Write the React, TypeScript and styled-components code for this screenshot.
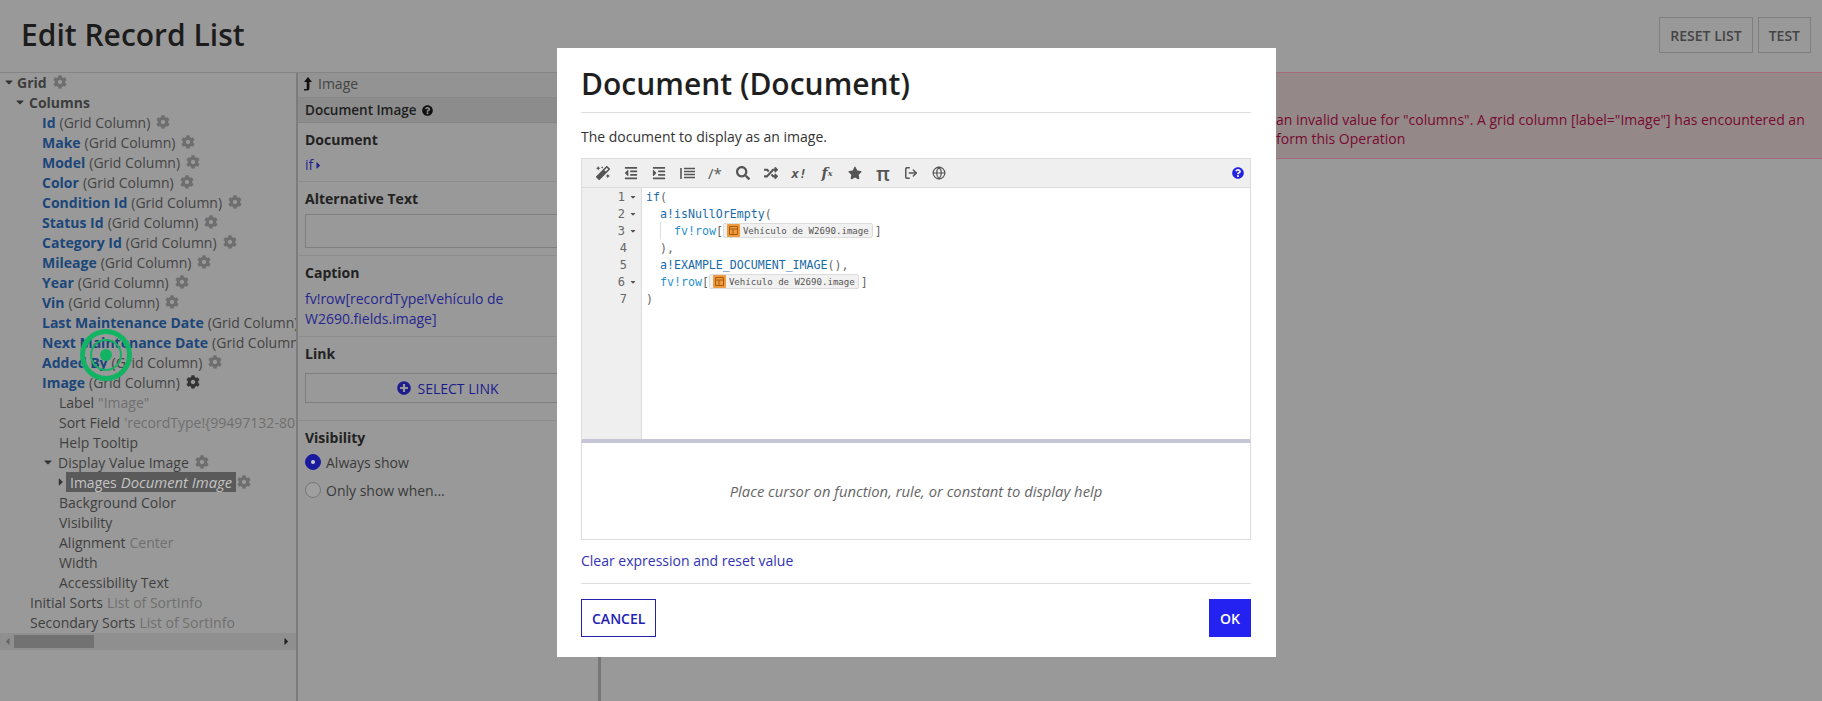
import React from "react";
import styled, { createGlobalStyle } from "styled-components";
import {
  FaCog, FaCaretDown, FaCaretRight, FaCaretLeft, FaQuestionCircle, FaPlusCircle,
  FaMagic, FaOutdent, FaIndent, FaSearch, FaRandom, FaStar,
} from "react-icons/fa";
import { LogOut, Globe } from "lucide-react";

const Global = createGlobalStyle`
  html, body { margin: 0; padding: 0; height: 701px; overflow: hidden; background: #999; }
  * { box-sizing: border-box; }
  body { font-family: "Open Sans", "Noto Sans", sans-serif; font-size: 14px; color: #333; }
`;

const Page = styled.div`
  position: relative;
  width: 1822px;
  height: 701px;
  display: flex;
  flex-direction: column;
  background: #999;
  overflow: hidden;
`;
const Header = styled.header`
  height: 73px;
  flex: none;
  display: flex;
  align-items: flex-start;
  justify-content: space-between;
  padding: 17px 11px 0 21px;
  border-bottom: 1px solid #858585;
`;
const PageTitle = styled.h1`
  margin: 0;
  font-size: 30px;
  line-height: 36px;
  font-weight: 600;
  color: #1c1c1c;
`;
const HeaderActions = styled.div`
  display: flex;
  gap: 5px;
`;
const GhostButton = styled.button`
  height: 36px;
  padding: 0 ${(p) => p.$pad}px;
  background: transparent;
  border: 1px solid #7f7f7f;
  font: 600 14px "Open Sans", sans-serif;
  color: #444;
`;
const Body = styled.div`
  flex: 1;
  display: flex;
  min-height: 0;
`;
const TreePanel = styled.nav`
  width: 296px;
  flex: none;
  display: flex;
  flex-direction: column;
  overflow: hidden;
`;
const TreeRows = styled.div`
  margin-top: -1px;
`;
const Row = styled.div`
  height: 20px;
  display: flex;
  align-items: center;
  white-space: nowrap;
  padding-left: ${(p) => p.$indent}px;
  font-size: 14px;
  color: #3f3f3f;
`;
const Caret = styled.span`
  width: ${(p) => p.$w}px;
  flex: none;
  display: flex;
  align-items: center;
  color: #333;
  font-size: 12px;
`;
const NodeHead = styled.b`
  font-weight: 700;
  color: ${(p) => (p.$blue ? "#1b4679" : "#3d3d3d")};
  margin-right: 4px;
`;
const Muted = styled.span`
  color: ${(p) => (p.$soft ? "#6f6f6f" : "#444")};
  margin-left: ${(p) => p.$ml || 0}px;
`;
const Selected = styled.span`
  height: 20px;
  display: flex;
  align-items: center;
  padding: 0 4px;
  background: #5a5a5a;
  color: #c4c4c4;
  em { margin-left: 4px; font-size: 14.8px; }
`;
const Gear = styled(FaCog)`
  margin-left: 6px;
  flex: none;
  font-size: 14px;
  color: ${(p) => (p.$dark ? "#333" : "#6e6e6e")};
`;
const ScrollBar = styled.div`
  margin-top: 1px;
  height: 17px;
  display: flex;
  align-items: center;
  justify-content: space-between;
  background: #8f8f8f;
  padding: 0 4px 0 2px;
  font-size: 11px;
  color: #666;
  position: relative;
`;
const ScrollThumb = styled.div`
  position: absolute;
  left: 14px;
  top: 2px;
  width: 80px;
  height: 13px;
  background: #727272;
`;
const Splitter = styled.div`
  width: ${(p) => p.$w}px;
  flex: none;
  background: ${(p) => p.$c};
`;
const Config = styled.section`
  width: 300px;
  flex: none;
  display: flex;
  flex-direction: column;
`;
const Crumb = styled.div`
  height: 25px;
  display: flex;
  align-items: center;
  gap: 5px;
  padding: 0 0 3px 5px;
  background: #939393;
  border-bottom: 1px solid #888;
  color: #444;
  font-size: 14px;
`;
const ConfigTitle = styled.div`
  height: 25px;
  display: flex;
  align-items: center;
  gap: 5px;
  padding-left: 7px;
  background: #8c8c8c;
  border-bottom: 1px solid #858585;
  color: #1e1e1e;
  font-size: 13.5px;
  font-weight: 600;
  svg { font-size: 11px; color: #111; }
`;
const Field = styled.div`
  padding: ${(p) => p.$top}px 7px 0;
  height: ${(p) => p.$h}px;
  border-bottom: ${(p) => (p.$last ? "none" : "1px solid #8e8e8e")};
  flex: none;
`;
const FieldLabel = styled.div`
  font-size: 14px;
  font-weight: 700;
  line-height: 20px;
  color: #222;
`;
const FieldLink = styled.div`
  margin-top: ${(p) => p.$mt}px;
  font-size: 14px;
  line-height: 20px;
  color: #26268f;
  svg { font-size: 11px; vertical-align: -1px; }
`;
const EmptyInput = styled.div`
  margin-top: 5px;
  height: 34px;
  border: 1px solid #7f7f7f;
`;
const LinkButton = styled.div`
  margin-top: 9px;
  height: 30px;
  border: 1px solid #7f7f7f;
  display: flex;
  align-items: center;
  justify-content: center;
  gap: 6px;
  font-size: 14px;
  color: #1c1c8f;
  svg { font-size: 14px; }
`;
const Radio = styled.div`
  display: flex;
  align-items: center;
  gap: 5px;
  height: 20px;
  margin-top: ${(p) => p.$mt}px;
  font-size: 14px;
  color: #3a3a3a;
`;
const RadioMark = styled.span`
  width: 16px;
  height: 16px;
  border-radius: 50%;
  flex: none;
  background: ${(p) => (p.$on ? "#1a1a9e" : "#9f9f9f")};
  border: 1px solid ${(p) => (p.$on ? "#1a1a9e" : "#777")};
  display: flex;
  align-items: center;
  justify-content: center;
  &::after {
    content: "";
    width: 4px;
    height: 4px;
    border-radius: 50%;
    background: ${(p) => (p.$on ? "#ccc" : "transparent")};
  }
`;
const Stage = styled.main`
  flex: 1;
  min-width: 0;
`;
const ErrorBanner = styled.div`
  height: 87px;
  margin-top: -1px;
  padding: 37px 0 0 675px;
  background: #958888;
  border-top: 1px solid #a3697d;
  border-bottom: 1px solid #a3697d;
  color: #760a30;
  font-size: 14px;
  line-height: 19px;
  white-space: nowrap;
`;
const Modal = styled.div`
  position: absolute;
  left: 557px;
  top: 48px;
  width: 719px;
  height: 609px;
  background: #fff;
  padding: 0 25px 0 24px;
  display: flex;
  flex-direction: column;
`;
const ModalTitle = styled.h2`
  margin: 0;
  height: 65px;
  flex: none;
  display: flex;
  align-items: center;
  font-size: 30px;
  font-weight: 600;
  color: #1f1f1f;
  border-bottom: 1px solid #dcdcdc;
  padding-top: 7px;
`;
const Description = styled.p`
  margin: 0;
  height: 45px;
  flex: none;
  display: flex;
  align-items: center;
  padding-top: 2px;
  font-size: 14px;
  color: #333;
`;
const Toolbar = styled.div`
  height: 30px;
  flex: none;
  display: flex;
  align-items: center;
  background: #efefef;
  border: 1px solid #dcdcdc;
  padding-left: 7px;
  position: relative;
`;
const Tool = styled.span`
  width: 28px;
  height: 20px;
  flex: none;
  display: flex;
  align-items: center;
  justify-content: center;
  color: #555;
  font-size: ${(p) => p.$size || 14}px;
  font-weight: ${(p) => p.$weight || 400};
  font-family: ${(p) => (p.$mono ? '"DejaVu Sans Mono", monospace' : p.$serif ? '"DejaVu Serif", serif' : '"Open Sans", sans-serif')};
  font-style: ${(p) => (p.$italic ? "italic" : "normal")};
  small { font-size: 8px; }
`;
const HelpIcon = styled(FaQuestionCircle)`
  margin-left: auto;
  margin-right: 6px;
  font-size: 12px;
  color: #2322e0;
`;
const Editor = styled.div`
  height: 255px;
  flex: none;
  display: flex;
  border-left: 1px solid #dcdcdc;
  border-right: 1px solid #dcdcdc;
  border-bottom: 4px solid #c6c6d6;
`;
const Gutter = styled.div`
  width: 60px;
  flex: none;
  background: #efefef;
  border-right: 1px solid #dcdcdc;
`;
const GutterLine = styled.div`
  height: 17px;
  display: flex;
  align-items: center;
  justify-content: flex-end;
  gap: 4px;
  padding-right: ${(p) => (p.$fold ? 4 : 14)}px;
  font: 12px "DejaVu Sans Mono", monospace;
  color: #666;
  svg { font-size: 8px; color: #555; }
`;
const Code = styled.div`
  flex: 1;
  padding: 0 0 0 4px;
`;
const CodeLine = styled.div`
  height: 17px;
  display: flex;
  align-items: center;
  padding-left: ${(p) => (p.$depth || 0) * 14}px;
  font: 11.6px "DejaVu Sans Mono", monospace;
  color: #666;
  white-space: pre;
`;
const Fn = styled.span`
  color: ${(p) => (p.$light ? "#2a90c8" : "#1b6aa8")};
`;
const Guide = styled.span`
  width: 14px;
  height: 17px;
  flex: none;
  margin-left: -14px;
  border-left: 1px solid #ddd;
`;
const Chip = styled.span`
  height: 15px;
  display: inline-flex;
  align-items: center;
  gap: 3px;
  margin: 0 2px 0 0;
  padding: 0 3px;
  background: #f1f1f1;
  border: 1px solid #ddd;
  border-radius: 2px;
  font: 9.1px "DejaVu Sans Mono", monospace;
  color: #555;
`;
const HelpPane = styled.div`
  height: 97px;
  flex: none;
  display: flex;
  align-items: center;
  justify-content: center;
  border: 1px solid #dcdcdc;
  border-top: none;
  font-size: 14.8px;
  font-style: italic;
  color: #666;
`;
const ClearLink = styled.div`
  flex: none;
  height: 44px;
  display: flex;
  align-items: center;
  border-bottom: 1px solid #dcdcdc;
  padding-bottom: 3px;
  margin-bottom: 15px;
  font-size: 14px;
  color: #3232b4;
`;
const Actions = styled.div`
  display: flex;
  justify-content: space-between;
`;
const ActionButton = styled.button`
  height: 38px;
  padding: 0 ${(p) => p.$pad}px;
  border: 1px solid #2322a8;
  background: ${(p) => (p.$primary ? "#2322f0" : "#fff")};
  border-color: ${(p) => (p.$primary ? "#2322f0" : "#2322a8")};
  color: ${(p) => (p.$primary ? "#fff" : "#2322b4")};
  font: 600 14px "Open Sans", sans-serif;
`;
const Pulse = styled.svg`
  position: absolute;
  left: 79px;
  top: 328px;
  width: 54px;
  height: 54px;
  pointer-events: none;
`;

const columns = [
  "Id", "Make", "Model", "Color", "Condition Id", "Status Id", "Category Id", "Mileage", "Year", "Vin",
  "Last Maintenance Date", "Next Maintenance Date", "Added By",
];
const fixedLeaves: [string, string][] = [
  ["Label", '"Image"'],
  ["Sort Field", "'recordType!{99497132-80"],
  ["Help Tooltip", ""],
];
const laterLeaves: [string, string][] = [
  ["Background Color", ""],
  ["Visibility", ""],
  ["Alignment", "Center"],
  ["Width", ""],
  ["Accessibility Text", ""],
];

const RecordIcon = () => (
  <svg width="13" height="13" viewBox="0 0 13 13">
    <rect width="13" height="13" rx="1" fill="#ef9a3c" />
    <path d="M2.5 2.5h8v8h-8zM2.5 5h8M6 5v5.5" fill="none" stroke="#a65a10" strokeWidth="1" />
  </svg>
);

const UpArrow = () => (
  <svg width="10" height="14" viewBox="0 0 10 14">
    <path d="M5 0 9 5H6.4v6.5c0 1.2-.8 2-2 2H1v-1.6h2.4c.2 0 .3-.1.3-.3V5H1z" fill="#111" />
  </svg>
);

const IndentLines = () => (
  <svg width="15" height="13" viewBox="0 0 15 13">
    <path d="M1 1v11M4 1.5h11M4 4.5h11M4 7.5h11M4 10.5h11" fill="none" stroke="#555" strokeWidth="1.6" />
  </svg>
);

const Token = () => (
  <Chip>
    <RecordIcon />
    Vehículo de W2690.image
  </Chip>
);

const lineFolds = [true, true, true, false, false, true, false];

export default function App() {
  return (
    <Page>
      <Global />
      <Header>
        <PageTitle>Edit Record List</PageTitle>
        <HeaderActions>
          <GhostButton $pad={10}>RESET LIST</GhostButton>
          <GhostButton $pad={10}>TEST</GhostButton>
        </HeaderActions>
      </Header>
      <Body>
        <TreePanel>
          <TreeRows>
            <Row $indent={3}>
              <Caret $w={14}><FaCaretDown /></Caret>
              <NodeHead>Grid</NodeHead>
              <Gear style={{ marginLeft: 2 }} />
            </Row>
            <Row $indent={14}>
              <Caret $w={15}><FaCaretDown /></Caret>
              <NodeHead>Columns</NodeHead>
            </Row>
            {columns.map((c) => (
              <Row key={c} $indent={42}>
                <NodeHead $blue>{c}</NodeHead>
                <Muted>(Grid Column)</Muted>
                <Gear />
              </Row>
            ))}
            <Row $indent={42}>
              <NodeHead $blue>Image</NodeHead>
              <Muted>(Grid Column)</Muted>
              <Gear $dark />
            </Row>
            {fixedLeaves.map(([k, v]) => (
              <Row key={k} $indent={59}>
                {k}
                {v && <Muted $soft $ml={4}>{v}</Muted>}
              </Row>
            ))}
            <Row $indent={42}>
              <Caret $w={16}><FaCaretDown /></Caret>
              Display Value Image
              <Gear />
            </Row>
            <Row $indent={56}>
              <Caret $w={10}><FaCaretRight /></Caret>
              <Selected>Images <em>Document Image</em></Selected>
              <Gear style={{ marginLeft: 1 }} />
            </Row>
            {laterLeaves.map(([k, v]) => (
              <Row key={k} $indent={59}>
                {k}
                {v && <Muted $soft $ml={4}>{v}</Muted>}
              </Row>
            ))}
            <Row $indent={30}>Initial Sorts<Muted $soft $ml={4}>List of SortInfo</Muted></Row>
            <Row $indent={30}>Secondary Sorts<Muted $soft $ml={4}>List of SortInfo</Muted></Row>
          </TreeRows>
          <ScrollBar>
            <FaCaretLeft />
            <ScrollThumb />
            <FaCaretRight color="#222" />
          </ScrollBar>
        </TreePanel>
        <Splitter $w={2} $c="#7c7c7c" />
        <Config>
          <Crumb><UpArrow />Image</Crumb>
          <ConfigTitle>Document Image <FaQuestionCircle /></ConfigTitle>
          <Field $top={7} $h={59}>
            <FieldLabel>Document</FieldLabel>
            <FieldLink $mt={5}>if<FaCaretRight /></FieldLink>
          </Field>
          <Field $top={7} $h={74}>
            <FieldLabel>Alternative Text</FieldLabel>
            <EmptyInput />
          </Field>
          <Field $top={7} $h={81}>
            <FieldLabel>Caption</FieldLabel>
            <FieldLink $mt={6}>fv!row[recordType!Vehículo de W2690.fields.image]</FieldLink>
          </Field>
          <Field $top={7} $h={84}>
            <FieldLabel>Link</FieldLabel>
            <LinkButton><FaPlusCircle />SELECT LINK</LinkButton>
          </Field>
          <Field $top={7} $h={90} $last>
            <FieldLabel>Visibility</FieldLabel>
            <Radio $mt={4}><RadioMark $on />Always show</Radio>
            <Radio $mt={8}><RadioMark />Only show when...</Radio>
          </Field>
        </Config>
        <Splitter $w={3} $c="#777" />
        <Stage>
          <ErrorBanner>
            an invalid value for "columns". A grid column [label="Image"] has encountered an
            <br />
            form this Operation
          </ErrorBanner>
        </Stage>
      </Body>
      <Pulse viewBox="0 0 54 54">
        <circle cx="27" cy="27" r="23.5" fill="none" stroke="#12b464" strokeWidth="5" />
        <circle cx="27" cy="27" r="15" fill="none" stroke="#12b464" strokeWidth="2" />
        <circle cx="27" cy="27" r="6" fill="#12b464" />
      </Pulse>
      <Modal>
        <ModalTitle>Document (Document)</ModalTitle>
        <Description>The document to display as an image.</Description>
        <Toolbar>
          <Tool><FaMagic /></Tool>
          <Tool><FaOutdent /></Tool>
          <Tool><FaIndent /></Tool>
          <Tool><IndentLines /></Tool>
          <Tool $size={15}>/*</Tool>
          <Tool><FaSearch /></Tool>
          <Tool><FaRandom /></Tool>
          <Tool $mono $italic $weight={700} $size={13}>x!</Tool>
          <Tool $serif $italic $weight={700}>f<small>x</small></Tool>
          <Tool><FaStar /></Tool>
          <Tool $size={20} $weight={600}>π</Tool>
          <Tool><LogOut size={14} strokeWidth={2.5} /></Tool>
          <Tool><Globe size={14} strokeWidth={2} /></Tool>
          <HelpIcon />
        </Toolbar>
        <Editor>
          <Gutter>
            {lineFolds.map((f, i) => (
              <GutterLine key={i} $fold={f}>
                {i + 1}
                {f && <FaCaretDown />}
              </GutterLine>
            ))}
          </Gutter>
          <Code>
            <CodeLine><Fn>if</Fn>(</CodeLine>
            <CodeLine $depth={1}><Fn>a!isNullOrEmpty</Fn>(</CodeLine>
            <CodeLine $depth={2}><Guide /><Fn $light>fv!row</Fn>[<Token />]</CodeLine>
            <CodeLine $depth={1}>),</CodeLine>
            <CodeLine $depth={1}><Fn>a!EXAMPLE_DOCUMENT_IMAGE</Fn>(),</CodeLine>
            <CodeLine $depth={1}><Fn $light>fv!row</Fn>[<Token />]</CodeLine>
            <CodeLine>)</CodeLine>
          </Code>
        </Editor>
        <HelpPane>Place cursor on function, rule, or constant to display help</HelpPane>
        <ClearLink>Clear expression and reset value</ClearLink>
        <Actions>
          <ActionButton $pad={10}>CANCEL</ActionButton>
          <ActionButton $primary $pad={10}>OK</ActionButton>
        </Actions>
      </Modal>
    </Page>
  );
}
